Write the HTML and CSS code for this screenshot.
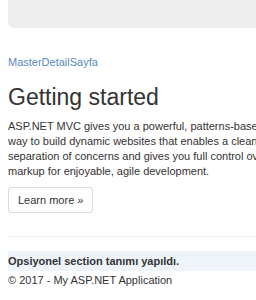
FILE: index.html
```html
<!DOCTYPE html>
<html lang="tr">
<head>
<title>MasterDetailSayfa</title>
<meta charset="utf-8">
<link rel="stylesheet" href="styles.css">
</head>
<body>

<div class="wrap">
	<div class="jumbotron"></div>

	<a href="#" class="page_link">MasterDetailSayfa</a>

	<h1 class="title">Getting started</h1>
	<p class="lead">
		ASP.NET MVC gives you a powerful, patterns-based<br>
		way to build dynamic websites that enables a clean<br>
		separation of concerns and gives you full control over<br>
		markup for enjoyable, agile development.
	</p>
	<a href="#" class="btn_default">Learn more &raquo;</a>

	<hr class="line">

	<div class="section_box">Opsiyonel section tanımı yapıldı.</div>
	<p class="copy">&copy; 2017 - My ASP.NET Application</p>
</div>

</body>
</html>
```

FILE: styles.css
```css
body,div,p,h1,hr,a{margin:0;padding:0;}
body{overflow:hidden;font-family:"Liberation Sans",Arial,sans-serif;font-size:11px;line-height:15px;color:#333;background:#fff;}
a{text-decoration:none;}
/**/
.wrap{width:320px;padding-left:8px;}
.jumbotron{height:28px;border-radius:0 0 0 6px;background:#eee;}

.page_link{display:block;margin-top:27px;color:#5a89bd;}

.title{margin-top:14px;font-size:23px;line-height:26px;font-weight:normal;color:#333;}
.lead{margin-top:9px;white-space:nowrap;}

.btn_default{display:inline-block;margin-top:8px;padding:5px 9px 5px;border:1px solid #ddd;border-radius:3px;line-height:14px;color:#333;background:#fff;}

.line{margin-top:23px;height:0;border:none;border-top:1px solid #eee;}

.section_box{margin-top:14px;line-height:20px;font-weight:bold;color:#333;background:#eef4fa;}
.copy{margin-top:2px;}
```
